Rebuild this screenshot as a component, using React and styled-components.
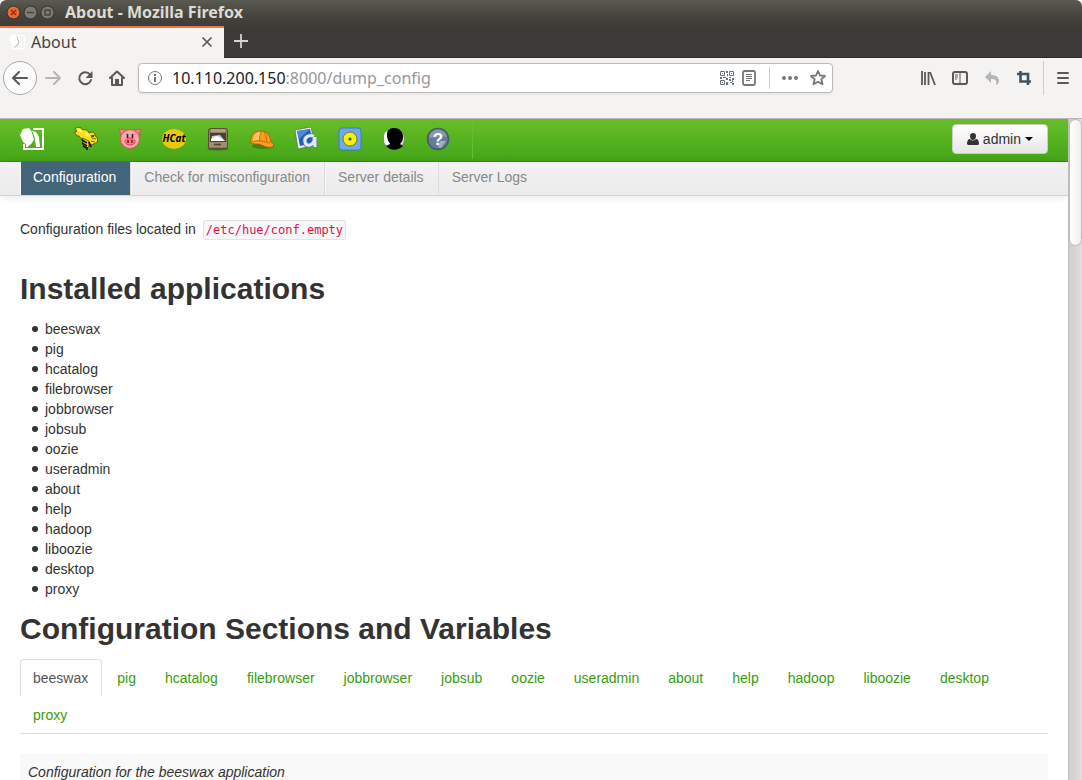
import React from "react";
import styled, { createGlobalStyle } from "styled-components";

const Global = createGlobalStyle`
  * { box-sizing: border-box; }
  html, body, #root { height: 100%; }
  body { margin: 0; overflow: hidden; background: #fff; color: #333; font: 14px/20px "Liberation Sans", Arial, sans-serif; }
  a { text-decoration: none; }
  button { font: inherit; }
  svg { display: block; flex: none; }
`;

const Window = styled.div`
  display: flex;
  flex-direction: column;
  height: 100vh;
  overflow: hidden;
`;

const TitleBar = styled.header`
  display: flex;
  align-items: center;
  gap: 2px;
  height: 26px;
  flex: none;
  padding: 0 0 2px 6px;
  background: linear-gradient(#5b5a51, #45443e 60%, #3d3c37);
  border-radius: 6px 6px 0 0;
  color: #dfdbd2;
`;

const WindowButton = styled.button`
  width: 15px;
  height: 15px;
  padding: 0;
  border: 0;
  background: none;
`;

const WindowTitle = styled.strong`
  margin-left: 8px;
  font: bold 16px/20px "Noto Sans", "Open Sans", sans-serif;
  white-space: nowrap;
`;

const TabStrip = styled.div`
  display: flex;
  height: 32px;
  flex: none;
  background: #3c3b37;
  border-bottom: 1px solid #2b2a27;
`;

const BrowserTab = styled.div`
  display: flex;
  align-items: center;
  gap: 6px;
  width: 224px;
  height: 32px;
  padding: 0 9px 2px;
  border-top: 2px solid #f07746;
  background: #f4f3f1;
  color: #444;
  font: 16px/20px "Noto Sans", "Open Sans", sans-serif;
`;

const TabTitle = styled.span`
  flex: 1;
`;

const IconButton = styled.button`
  display: flex;
  align-items: center;
  justify-content: center;
  width: ${(p) => p.$w || 16}px;
  height: ${(p) => p.$h || 16}px;
  flex: none;
  padding: 0;
  border: 0;
  background: none;
`;

const Toolbar = styled.nav`
  display: flex;
  align-items: center;
  height: 40px;
  flex: none;
  padding: 0 11px 0 3px;
  background: #f4f3f1;
`;

const BackButton = styled(IconButton)`
  width: 34px;
  height: 34px;
  border: 1px solid #aaa8a5;
  border-radius: 50%;
  background: #fcfcfc;
`;

const NavIcons = styled.div`
  display: flex;
  gap: 16px;
  margin: 0 13px 0 8px;
`;

const UrlBox = styled.form`
  display: flex;
  align-items: center;
  flex: 0 1 695px;
  height: 30px;
  padding: 0 6px 0 8px;
  border: 1px solid #bdbbb8;
  border-radius: 4px;
  background: #fff;
  box-shadow: 0 1px 3px rgba(0, 0, 0, 0.08);
  font: 16px/20px "Noto Sans", "Open Sans", sans-serif;
`;

const UrlField = styled.label`
  position: relative;
  display: block;
  flex: 1;
  min-width: 0;
  margin-left: 9px;
`;

const UrlInput = styled.input`
  display: block;
  width: 100%;
  padding: 0;
  border: 0;
  outline: 0;
  background: none;
  color: transparent;
  font: inherit;
`;

const UrlText = styled.span`
  position: absolute;
  inset: 0;
  color: #999;
  white-space: nowrap;
  pointer-events: none;
  b { font-weight: normal; color: #222; }
`;

const UrlActions = styled.div`
  display: flex;
  align-items: center;
  gap: ${(p) => p.$gap}px;
`;

const Rule = styled.span`
  width: 1px;
  height: ${(p) => p.$h}px;
  margin: 0 ${(p) => p.$m}px;
  background: #cfcdca;
`;

const RightIcons = styled.div`
  display: flex;
  gap: 16px;
  margin-left: auto;
`;

const BookmarkBar = styled.div`
  height: 21px;
  flex: none;
  background: #f4f3f1;
  border-bottom: 1px solid #b9b7b4;
`;

const Viewport = styled.div`
  display: flex;
  flex: 1;
  min-height: 0;
`;

const Page = styled.div`
  flex: 1;
  min-width: 0;
  overflow: hidden;
`;

const ScrollTrack = styled.div`
  width: 14px;
  flex: none;
  background: linear-gradient(90deg, #cfcecc, #e0dfdd);
  border-left: 1px solid #bfbebc;
`;

const ScrollThumb = styled.div`
  height: 127px;
  border: 1px solid #bdbbb8;
  border-radius: 7px;
  background: linear-gradient(90deg, #fff, #efeeec);
`;

const AppBar = styled.nav`
  display: flex;
  align-items: center;
  height: 43px;
  padding: 0 20px 2px;
  background: linear-gradient(#69be28, #43a517);
  border-bottom: 1px solid #35900f;
`;

const AppLinks = styled.div`
  display: flex;
  align-items: center;
  gap: 20px;
  height: 40px;
  margin-left: 30px;
  padding-right: 22px;
  border-right: 1px solid #65bd35;
`;

const AppLink = styled.a`
  display: block;
  width: 24px;
  height: 24px;
`;

const UserButton = styled.button`
  display: flex;
  align-items: center;
  gap: 4px;
  height: 30px;
  margin-left: auto;
  padding: 0 14px;
  border: 1px solid #c8cfc4;
  border-radius: 4px;
  background: linear-gradient(#fff, #e6e6e6);
  color: #333;
`;

const SubNav = styled.ul`
  display: flex;
  height: 34px;
  margin: 0;
  padding: 0 20px;
  list-style: none;
  background: linear-gradient(#f2f2f2, #ebebeb);
  border-bottom: 1px solid #d4d4d4;
  box-shadow: 0 1px 8px rgba(0, 0, 0, 0.1);
`;

const SubNavLink = styled.a`
  display: block;
  height: 33px;
  padding: 5px 14px 8px 12px;
  border-right: 1px solid ${(p) => (p.$last ? "transparent" : "#dcdcdc")};
  border-left: 1px solid ${(p) => (p.$last ? "transparent" : "#f6f6f6")};
  color: ${(p) => (p.$active ? "#fff" : "#888")};
  background: ${(p) => (p.$active ? "#436579" : "none")};
`;

const Content = styled.main`
  padding: 23px 20px 0;
`;

const Location = styled.p`
  margin: 0 0 30px;
`;

const Path = styled.code`
  margin-left: 3px;
  padding: 2px;
  border: 1px solid #e1e1e8;
  border-radius: 3px;
  background: #f7f7f9;
  color: #d14;
  font: 12px "DejaVu Sans Mono", monospace;
`;

const Heading = styled.h2`
  margin: 10px 0;
  font-size: 30px;
  line-height: 40px;
`;

const AppList = styled.ul`
  margin: 0 0 0 12px;
  padding: 0;
  list-style: none;
`;

const AppItem = styled.li`
  display: flex;
  align-items: center;
  gap: 7px;
  &::before {
    content: "";
    width: 6px;
    height: 6px;
    border-radius: 50%;
    background: #333;
  }
`;

const SectionTabs = styled.ul`
  display: flex;
  flex-wrap: wrap;
  margin: 0 0 20px;
  padding: 0;
  list-style: none;
  border-bottom: 1px solid #ddd;
`;

const SectionLink = styled.a`
  display: block;
  height: 37px;
  margin-right: 2px;
  padding: 8px 13px 8px 12px;
  border: 1px solid ${(p) => (p.$active ? "#ddd" : "transparent")};
  border-bottom: 0;
  border-radius: 4px 4px 0 0;
  color: ${(p) => (p.$active ? "#555" : "#389c0e")};
`;

const Description = styled.div`
  height: 60px;
  padding: 8px;
  background: #f9f9f9;
  font-style: italic;
`;

const line = { fill: "none", stroke: "#5a5957", strokeWidth: 2, strokeLinecap: "round", strokeLinejoin: "round" };

const HueLogo = ({ size = 24 }) => (
  <svg width={size} height={size} viewBox="0 0 24 24">
    <path fill="none" stroke="#fff" strokeWidth="2" d="M13 2h10v20H4v-5" />
    <path fill="#fff" d="M0 8 3 2l6-1 3 4 2 8-3 4-3 2-5-4z" />
    <path fill="#fff" d="M12 4 16 5l3 5 1 10-4 0-1-7zM13 15l-5 5-2 0 0-2z" />
    <path fill="none" stroke="#49a91b" strokeWidth=".8" d="m12 5 3 8-3 4-4 3" />
  </svg>
);

const apps = [
  ["Beeswax", <svg width="24" height="24" viewBox="0 0 24 24"><path fill="#f4df16" stroke="#3d3906" strokeWidth=".7" d="M1 2C3-1 7 0 9 3c2-1 5 0 6 3l3-1c2 0 3 2 3 4l2 1c1 3 1 5-1 6l-5 2-3-3-5-1-4-5c-3 0-4-2-4-4l2-1z" /><path fill="#fff46a" d="M3 2c3-1 5 1 6 4L4 4zm8 4c2-1 4 1 4 3l-3 1z" /><path fill="#f3dc14" stroke="#222" strokeWidth=".7" d="m8 11 7 3 0 5-3 3-3-4z" /><path stroke="#191919" strokeWidth="1.800" fill="none" d="m8 13 5 3m-5 0 5 3m-4 0 4 2m0-1 0 3m2-8 2 5" /><path stroke="#776d0c" fill="none" d="m17 8 1 3 4 1m-5 2 4 1" /><circle cx="19" cy="9" r="1" fill="#222" /></svg>],
  ["Pig", <svg width="24" height="24" viewBox="0 0 24 24"><path fill="#f97984" stroke="#d54450" strokeWidth=".7" d="m1 2 7 1h8l7-1-3 9H4z" /><circle cx="12" cy="12" r="9.500" fill="#fba8ac" stroke="#dd4c58" /><ellipse cx="12" cy="14.500" rx="5" ry="3.500" fill="#f77c87" stroke="#d84553" /><path stroke="#40252b" strokeWidth="1.700" d="M9.500 7v4m5-4v4" /><path stroke="#7e1e2b" strokeWidth="1.600" d="M10 13v3m4-3v3" /></svg>],
  ["HCatalog", <svg width="24" height="24" viewBox="0 0 24 24"><ellipse cx="12" cy="12" rx="12" ry="10" fill="#e8c812" /><text x="12" y="15" textAnchor="middle" fontFamily="Open Sans, sans-serif" fontSize="10" fontWeight="bold" fontStyle="italic">HCat</text></svg>],
  ["File Browser", <svg width="24" height="24" viewBox="0 0 24 24"><ellipse cx="12" cy="22" rx="11" ry="1.500" fill="#255b0c" opacity=".7" /><rect x="2.500" y="1.500" width="19" height="20" rx="2" fill="#927e60" stroke="#594b36" /><path fill="#b4a17f" d="M5 2h14v3H5z" /><path fill="#4b3f30" d="M4 6h16v9H4z" /><path fill="#b9cfea" d="m6 9 8-1 5 6H5z" /><path fill="#fff" d="m5 12 6-3 8 5H5z" /><path fill="#a18d6d" d="M3 15h18v5H3z" /><path stroke="#514431" strokeWidth="1.700" d="M8 17.500h7" /></svg>],
  ["Job Browser", <svg width="24" height="24" viewBox="0 0 24 24"><ellipse cx="13" cy="19" rx="11" ry="3" fill="#255b0c" opacity=".5" /><path fill="#ff9d22" stroke="#b45500" strokeWidth=".8" d="M1 16C0 9 4 4 10 4c7 0 10 4 11 11l3 3c-1 3-6 3-10 1-5-3-9-1-13-3z" /><path fill="#ffc568" d="M3 12c1-5 4-7 8-7l-2 8-6 2z" /><path stroke="#d36c04" strokeWidth="1" fill="none" d="M11 5c-1 3-2 6-1 9m4-9c2 3 3 6 3 10M2 15c7-3 11 0 18 1" /></svg>],
  ["Job Designer", <svg width="24" height="24" viewBox="0 0 24 24"><path fill="#eee" stroke="#555" strokeWidth=".6" d="m1 3 16-3 4 18-17 4z" /><path fill="#1e5dbe" d="m3 4 13-2 3 14-13 3z" /><path fill="#5d94df" opacity=".8" d="m3 4 13-2-11 10z" /><path fill="none" stroke="#5e7892" strokeWidth="4.500" d="M20 9c-6-2-10 2-9 6 1 5 7 4 9-1l1-4v10" /><path fill="none" stroke="#dce9f6" strokeWidth="3" d="M20 9c-6-2-10 2-9 6 1 5 7 4 9-1l1-4v10" /></svg>],
  ["Oozie", <svg width="24" height="24" viewBox="0 0 24 24"><rect x="1" y="1" width="22" height="22" rx="3" fill="#6fa9ea" stroke="#387cca" /><circle cx="12" cy="12" r="7" fill="#ffed00" stroke="#5c7d41" /><circle cx="12" cy="12" r="1.600" fill="#245da0" /></svg>],
  ["User Admin", <svg width="24" height="24" viewBox="0 0 24 24"><circle cx="12" cy="12" r="10.500" fill="#d9ddd8" stroke="#777" strokeWidth=".7" /><path fill="#020202" d="M5 8C5 3 8 1 12 1c6 0 9 4 9 9 0 3-1 5-3 7l3 2c-5 5-13 5-17 0l4-2c-2-2-3-5-3-9z" /><path fill="#fff" d="M2 10c0-3 1-5 3-6-1 5 0 9 3 13l-4 1c-2-2-2-5-2-8z" /></svg>],
  ["Help", <svg width="24" height="24" viewBox="0 0 24 24"><circle cx="12" cy="12" r="10.500" fill="#667c94" stroke="#465a70" strokeWidth="1.500" /><path fill="#a9b8c8" opacity=".5" d="M3 10C5 0 19 0 21 10c-7-3-11 3-18 0z" /><path fill="#b7c7d7" opacity=".7" d="m14 14 6 0-5 7-3-1z" /><text x="12" y="18" textAnchor="middle" fontFamily="Liberation Sans, sans-serif" fontSize="17" fontWeight="bold" fill="#fff">?</text></svg>],
];

const sections = ["beeswax", "pig", "hcatalog", "filebrowser", "jobbrowser", "jobsub", "oozie", "useradmin", "about", "help", "hadoop", "liboozie", "desktop", "proxy"];
const subNav = ["Configuration", "Check for misconfiguration", "Server details", "Server Logs"];

const windowButtons = [
  ["Close", "#ee6337", "#8f2f12", "m5 5 5 5m0-5-5 5"],
  ["Minimize", "#7d7b74", "#45443f", "M4 7.500h7"],
  ["Maximize", "#7d7b74", "#45443f", "M5 5h5v5H5z"],
];

export default function App() {
  return (
    <Window>
      <Global />
      <TitleBar>
        {windowButtons.map(([name, fill, ink, d]) => (
          <WindowButton key={name} aria-label={name}>
            <svg width="15" height="15" viewBox="0 0 15 15"><circle cx="7.500" cy="7.500" r="6.500" fill={fill} stroke="#35342f" /><path d={d} fill="none" stroke={ink} strokeWidth="1.400" /></svg>
          </WindowButton>
        ))}
        <WindowTitle>About - Mozilla Firefox</WindowTitle>
      </TitleBar>
      <TabStrip>
        <BrowserTab>
          <HueLogo size={16} />
          <TabTitle>About</TabTitle>
          <IconButton aria-label="Close tab"><svg width="16" height="16" viewBox="0 0 16 16"><path {...line} d="m4 4 8 8m0-8-8 8" strokeWidth="1.700" /></svg></IconButton>
        </BrowserTab>
        <IconButton $w={34} $h={30} aria-label="New tab"><svg width="16" height="16" viewBox="0 0 16 16"><path d="M8 1v14M1 8h14" stroke="#d5d3ce" strokeWidth="1.800" /></svg></IconButton>
      </TabStrip>
      <Toolbar>
        <BackButton aria-label="Back"><svg width="16" height="16" viewBox="0 0 16 16"><path {...line} d="M15 8H1m6-6L1 8l6 6" /></svg></BackButton>
        <NavIcons>
          <IconButton aria-label="Forward"><svg width="16" height="16" viewBox="0 0 16 16"><path {...line} stroke="#b6b5b3" d="M1 8h14M9 2l6 6-6 6" /></svg></IconButton>
          <IconButton aria-label="Reload"><svg width="16" height="16" viewBox="0 0 16 16"><path {...line} d="M13 4.500A6 6 0 1 0 14 10" /><path fill="#5a5957" d="M15.500 1v7h-7z" /></svg></IconButton>
          <IconButton aria-label="Home"><svg width="16" height="16" viewBox="0 0 16 16"><path {...line} d="m1 8 7-6.500L15 8M3 8v7h10V8" /><path fill="#5a5957" d="M6 9h4v6H6z" /></svg></IconButton>
        </NavIcons>
        <UrlBox>
          <svg width="16" height="16" viewBox="0 0 16 16"><circle cx="8" cy="8" r="6.500" fill="none" stroke="#777" /><path stroke="#777" strokeWidth="2" d="M8 7v5M8 4v2" /></svg>
          <UrlField>
            <UrlInput aria-label="Address" defaultValue="" />
            <UrlText><b>10.110.200.150</b>:8000/dump_config</UrlText>
          </UrlField>
          <UrlActions $gap={6}>
            <IconButton type="button" aria-label="QR code"><svg width="14" height="14" viewBox="0 0 14 14"><path fill="none" stroke="#68737c" d="M.5.5h4v4h-4zm9 0h4v4h-4zm-9 9h4v4h-4z" /><path fill="#68737c" d="M2 2h1v1H2zm9 0h1v1h-1zm-9 9h1v1H2zM6 0h2v2H6zm1 3h1v2H7zM0 6h2v2H0zm3 0h3v1H3zm3 1h2v2H6zm3-1h2v1H9zm3 1h2v2h-2zM9 8h2v2H9zm-3 3h2v3H6zm4 0h2v1h-2zm2 1h2v2h-2zm0-3h1v2h-1z" /></svg></IconButton>
            <IconButton type="button" aria-label="Reader view"><svg width="16" height="16" viewBox="0 0 16 16"><rect x="2" y="1" width="12" height="14" rx="1.500" {...line} stroke="#777" strokeWidth="1.800" /><path stroke="#777" d="M5 4.500h6m-6 2h6m-6 2h6m-6 2h4" /></svg></IconButton>
          </UrlActions>
          <Rule $h={22} $m={12} />
          <UrlActions $gap={12}>
            <IconButton type="button" aria-label="Page actions"><svg width="16" height="16" viewBox="0 0 16 16"><path fill="#777" d="M0 8a2 2 0 1 1 4 0 2 2 0 0 1-4 0m6 0a2 2 0 1 1 4 0 2 2 0 0 1-4 0m6 0a2 2 0 1 1 4 0 2 2 0 0 1-4 0" /></svg></IconButton>
            <IconButton type="button" aria-label="Bookmark"><svg width="16" height="16" viewBox="0 0 16 16"><path {...line} stroke="#777" strokeWidth="1.800" d="m8 1 2 4.500 5 .5-3.700 3.300 1.200 5L8 11.800l-4.500 2.500 1.200-5L1 6l5-.5z" /></svg></IconButton>
          </UrlActions>
        </UrlBox>
        <RightIcons>
          <IconButton aria-label="Library"><svg width="16" height="16" viewBox="0 0 16 16"><path d="M2 1v14M5 2v13M8.500 2v13m1.500-13 5 13" stroke="#5a5957" strokeWidth="1.800" /></svg></IconButton>
          <IconButton aria-label="Sidebar"><svg width="16" height="16" viewBox="0 0 16 16"><rect x="1" y="2" width="14" height="12" rx="2" {...line} /><path stroke="#5a5957" d="M8 2v12M3 5h3M3 7h3M3 9h2" /></svg></IconButton>
          <IconButton aria-label="Undo"><svg width="16" height="16" viewBox="0 0 16 16"><path fill="#b4b7ba" d="M7 1v4c5 0 8 2 8 6 0 2-2 4-3 4 1-4 0-6-5-6v4L1 7z" /></svg></IconButton>
          <IconButton aria-label="Screenshot"><svg width="16" height="16" viewBox="0 0 16 16"><path fill="none" stroke="#40515f" strokeWidth="2.600" d="M1 4h11v11M4.500 1v10.500H15" /></svg></IconButton>
        </RightIcons>
        <Rule $h={34} $m={11} />
        <IconButton aria-label="Menu"><svg width="16" height="16" viewBox="0 0 16 16"><path {...line} d="M3 3h10M3 8h10M3 13h10" /></svg></IconButton>
      </Toolbar>
      <BookmarkBar />
      <Viewport>
        <Page>
          <AppBar>
            <a href="#home" aria-label="Hue"><HueLogo /></a>
            <AppLinks>
              {apps.map(([name, icon]) => <AppLink key={name} href="#app" aria-label={name}>{icon}</AppLink>)}
            </AppLinks>
            <UserButton>
              <svg width="12" height="12" viewBox="0 0 12 12"><path fill="#333" d="M6 0c2 0 3 1 3 3S8 7 6 7 3 5 3 3s1-3 3-3M3 6c2 2 4 2 6 0 2 0 3 2 3 5l-1 1H1l-1-1c0-3 1-5 3-5" /></svg>
              admin
              <svg width="8" height="4" viewBox="0 0 8 4"><path d="M0 0h8L4 4z" /></svg>
            </UserButton>
          </AppBar>
          <SubNav>
            {subNav.map((name, i) => <li key={name}><SubNavLink href="#nav" $active={i === 0} $last={i === 3}>{name}</SubNavLink></li>)}
          </SubNav>
          <Content>
            <Location>Configuration files located in <Path>/etc/hue/conf.empty</Path></Location>
            <Heading>Installed applications</Heading>
            <AppList>{sections.map((s) => <AppItem key={s}>{s}</AppItem>)}</AppList>
            <Heading>Configuration Sections and Variables</Heading>
            <SectionTabs>
              {sections.map((s, i) => <li key={s}><SectionLink href={"#" + s} $active={i === 0}>{s}</SectionLink></li>)}
            </SectionTabs>
            <Description>Configuration for the beeswax application</Description>
          </Content>
        </Page>
        <ScrollTrack><ScrollThumb /></ScrollTrack>
      </Viewport>
    </Window>
  );
}
